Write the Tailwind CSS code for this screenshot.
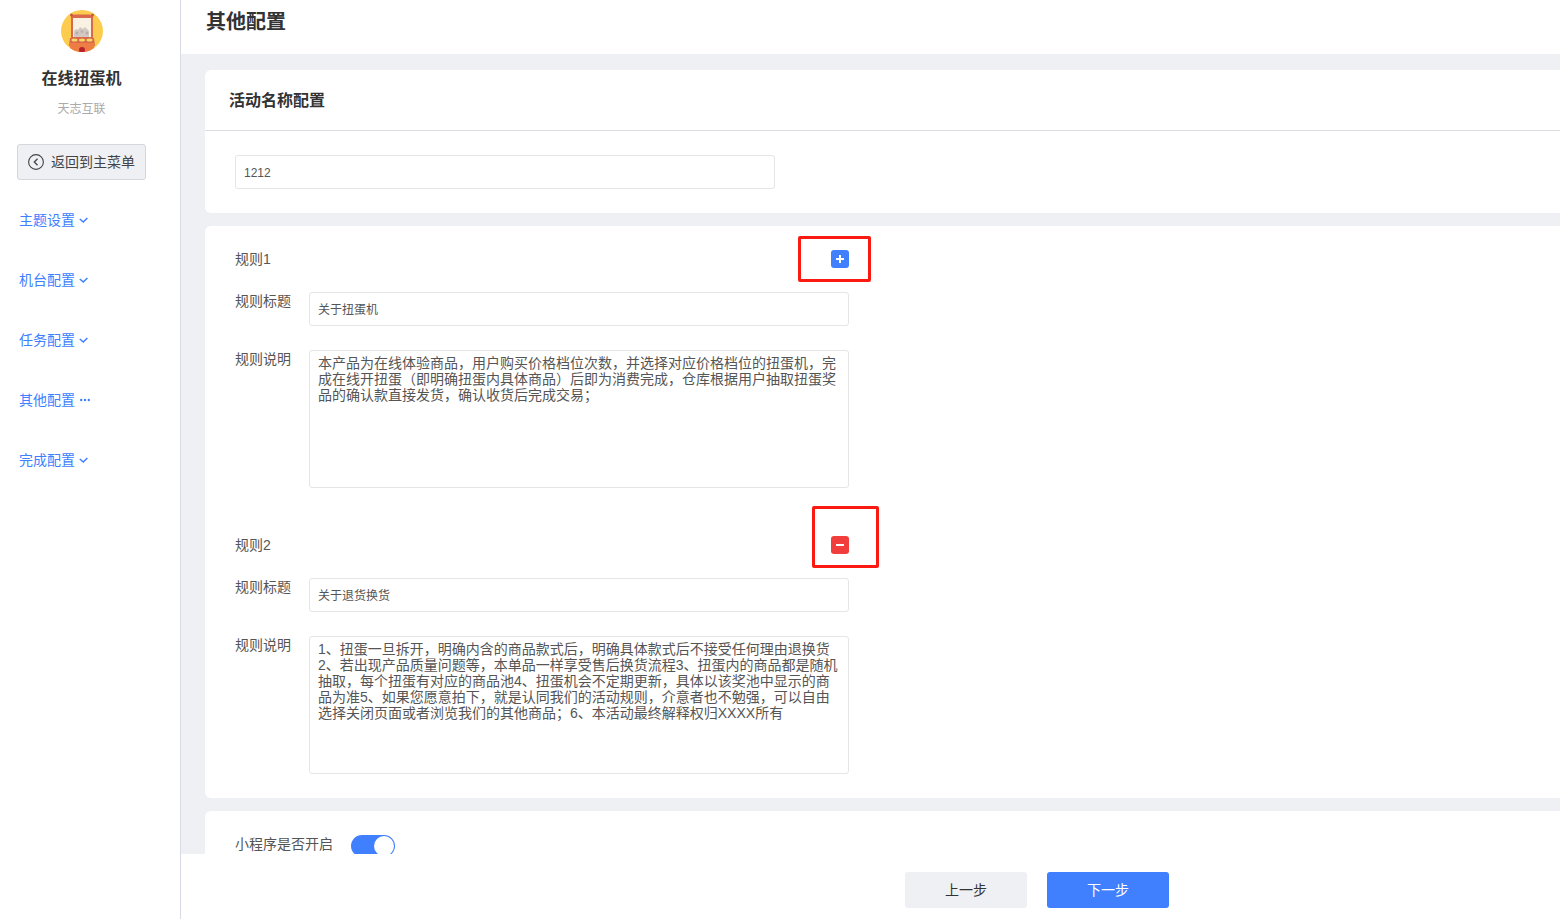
<!DOCTYPE html>
<html lang="zh">

<head>
    <meta charset="UTF-8" />
    <title>其他配置</title>
    <script src="https://cdn.jsdelivr.net/npm/@tailwindcss/browser@4"></script>
</head>

<body class="bg-white text-[#333] overflow-hidden font-['Liberation_Sans','Noto_Sans_CJK_SC',sans-serif]">
    <div class="relative flex h-[919px] w-[1560px] overflow-hidden">

        <!-- sidebar -->
        <aside class="w-[181px] shrink-0 border-r border-[#d8dbe3] bg-white pt-[10px]">
            <div class="w-[163px]">
                <svg class="mx-auto h-[42px] w-[42px]" viewBox="0 0 42 42">
                    <defs>
                        <clipPath id="avatar-clip"><circle cx="21" cy="21" r="21" /></clipPath>
                    </defs>
                    <g clip-path="url(#avatar-clip)">
                        <rect width="42" height="42" fill="#fdcb4e" />
                        <path d="M10 6 13 4.500h16L32 6v22H10z" fill="#d9694a" />
                        <circle cx="10.500" cy="5" r="1.500" fill="#c9573c" />
                        <circle cx="31.500" cy="5" r="1.500" fill="#c9573c" />
                        <rect x="12" y="8" width="18" height="19" fill="#f9f1e2" />
                        <path d="M13 27v-6l2-2 2 1 2-3 3 2 2-2 2 2 2 2v6z" fill="#d3c8c2" />
                        <circle cx="16" cy="23" r="1.500" fill="#b9aeaa" />
                        <circle cx="21" cy="21.500" r="1.500" fill="#bdb2ae" />
                        <circle cx="26" cy="23" r="1.500" fill="#b9aeaa" />
                        <path d="M9 28h24l1 8H8z" fill="#d9694a" />
                        <ellipse cx="13.500" cy="30" rx="3" ry="1.500" fill="#f7d766" />
                        <ellipse cx="21" cy="30" rx="3" ry="1.500" fill="#f7d766" />
                        <ellipse cx="28.500" cy="30" rx="3" ry="1.500" fill="#f7d766" />
                        <rect x="9" y="33" width="24" height="9" fill="#ee7d45" />
                        <circle cx="21" cy="40" r="3" fill="#b8202a" />
                    </g>
                </svg>
                <h1 class="mt-[15px] text-center text-[16px] leading-[24px] font-bold text-[#333]">在线扭蛋机</h1>
                <p class="mt-[8px] text-center text-[12px] leading-[20px] text-[#aaa]">天志互联</p>
            </div>

            <button class="mt-[25px] ml-[17px] flex h-[36px] w-[129px] items-center rounded-[3px] border border-[#d5d7de] bg-[#eff0f4] pl-[10px] text-[14px] text-[#444]">
                <svg class="h-[16px] w-[16px] shrink-0" viewBox="0 0 16 16" fill="none" stroke="#444" stroke-width="1.100">
                    <circle cx="8" cy="8" r="7.400" />
                    <path d="M9.500 4.800 6.300 8l3.200 3.200" stroke-width="1.300" />
                </svg>
                <span class="ml-[7px]">返回到主菜单</span>
            </button>

            <nav class="mt-[10px] pl-[19px] text-[14px] text-[#4080ff]">
                <a class="flex h-[60px] items-center">主题设置
                    <svg class="ml-[4px] h-[8px] w-[9px]" viewBox="0 0 9 8" fill="none" stroke="#4080ff" stroke-width="1.500"><path d="M.8 3 4.300 6 8.400 2" /></svg>
                </a>
                <a class="flex h-[60px] items-center">机台配置
                    <svg class="ml-[4px] h-[8px] w-[9px]" viewBox="0 0 9 8" fill="none" stroke="#4080ff" stroke-width="1.500"><path d="M.8 3 4.300 6 8.400 2" /></svg>
                </a>
                <a class="flex h-[60px] items-center">任务配置
                    <svg class="ml-[4px] h-[8px] w-[9px]" viewBox="0 0 9 8" fill="none" stroke="#4080ff" stroke-width="1.500"><path d="M.8 3 4.300 6 8.400 2" /></svg>
                </a>
                <a class="flex h-[60px] items-center">其他配置
                    <svg class="ml-[5px] h-[4px] w-[10px]" viewBox="0 0 10 4" fill="#4080ff"><circle cx="1.200" cy="2" r="1.200" /><circle cx="5" cy="2" r="1.200" /><circle cx="8.800" cy="2" r="1.200" /></svg>
                </a>
                <a class="flex h-[60px] items-center">完成配置
                    <svg class="ml-[4px] h-[8px] w-[9px]" viewBox="0 0 9 8" fill="none" stroke="#4080ff" stroke-width="1.500"><path d="M.8 3 4.300 6 8.400 2" /></svg>
                </a>
            </nav>
        </aside>

        <!-- main -->
        <main class="flex min-w-0 flex-1 flex-col">
            <header class="h-[54px] shrink-0 bg-white pt-[7px] pl-[25px]">
                <h2 class="text-[20px] leading-[30px] font-bold text-[#333]">其他配置</h2>
            </header>

            <div class="h-[800px] shrink-0 overflow-hidden bg-[#eff0f4] pt-[16px] pl-[24px]">
                <section class="h-[143px] rounded-l-[6px] bg-white">
                    <h3 class="flex h-[61px] items-center border-b border-[#dcdde3] pt-[2px] pl-[24px] text-[16px] font-bold text-[#333]">活动名称配置</h3>
                    <div class="pt-[24px] pl-[30px]">
                        <input class="h-[34px] w-[540px] rounded-[3px] border border-[#e5e5e5] px-[8px] pt-[2px] text-[12px] text-[#555] outline-none" value="1212" readonly />
                    </div>
                </section>

                <section class="mt-[13px] h-[572px] rounded-l-[6px] bg-white pt-[24px] pl-[30px]">
                    <div class="w-[614px]">
                        <div class="flex h-[18px] items-center justify-between text-[14px] text-[#555]">
                            <span>规则1</span>
                            <span class="flex h-[18px] w-[18px] items-center justify-center rounded-[3px] bg-[#4080ff]">
                                <svg class="h-[8px] w-[8px]" viewBox="0 0 8 8" fill="#fff"><path d="M3 0h2v3h3v2H5v3H3V5H0V3h3z" /></svg>
                            </span>
                        </div>
                        <div class="mt-[24px] flex">
                            <label class="w-[74px] text-[14px] leading-[18px] text-[#555]">规则标题</label>
                            <input class="h-[34px] w-[540px] rounded-[3px] border border-[#e5e5e5] px-[8px] pb-[2px] text-[12px] text-[#555] outline-none" value="关于扭蛋机" readonly />
                        </div>
                        <div class="mt-[24px] flex">
                            <label class="w-[74px] text-[14px] leading-[18px] text-[#555]">规则说明</label>
                            <textarea class="block h-[138px] w-[540px] resize-none overflow-hidden rounded-[3px] border border-[#e5e5e5] px-[8px] pt-[4px] text-[14px] leading-[16px] text-[#555] outline-none" readonly>本产品为在线体验商品，用户购买价格档位次数，并选择对应价格档位的扭蛋机，完成在线开扭蛋（即明确扭蛋内具体商品）后即为消费完成，仓库根据用户抽取扭蛋奖品的确认款直接发货，确认收货后完成交易；</textarea>
                        </div>

                        <div class="mt-[48px] flex h-[18px] items-center justify-between text-[14px] text-[#555]">
                            <span>规则2</span>
                            <span class="flex h-[18px] w-[18px] items-center justify-center rounded-[3px] bg-[#f23d3d]">
                                <span class="h-[2px] w-[8px] bg-white"></span>
                            </span>
                        </div>
                        <div class="mt-[24px] flex">
                            <label class="w-[74px] text-[14px] leading-[18px] text-[#555]">规则标题</label>
                            <input class="h-[34px] w-[540px] rounded-[3px] border border-[#e5e5e5] px-[8px] pb-[2px] text-[12px] text-[#555] outline-none" value="关于退货换货" readonly />
                        </div>
                        <div class="mt-[24px] flex">
                            <label class="w-[74px] text-[14px] leading-[18px] text-[#555]">规则说明</label>
                            <textarea class="block h-[138px] w-[540px] resize-none overflow-hidden rounded-[3px] border border-[#e5e5e5] px-[8px] pt-[4px] text-[14px] leading-[16px] text-[#555] outline-none" readonly>1、扭蛋一旦拆开，明确内含的商品款式后，明确具体款式后不接受任何理由退换货2、若出现产品质量问题等，本单品一样享受售后换货流程3、扭蛋内的商品都是随机抽取，每个扭蛋有对应的商品池4、扭蛋机会不定期更新，具体以该奖池中显示的商品为准5、如果您愿意拍下，就是认同我们的活动规则，介意者也不勉强，可以自由选择关闭页面或者浏览我们的其他商品；6、本活动最终解释权归XXXX所有</textarea>
                        </div>
                    </div>
                </section>

                <section class="mt-[13px] flex h-[100px] items-start rounded-l-[6px] bg-white pt-[24px] pl-[30px]">
                    <span class="w-[116px] text-[14px] leading-[18px] text-[#555]">小程序是否开启</span>
                    <span class="flex h-[22px] w-[44px] items-center justify-end rounded-full bg-[#4080ff] pr-[1px]">
                        <span class="h-[20px] w-[20px] rounded-full bg-white"></span>
                    </span>
                </section>
            </div>

            <footer class="flex flex-1 items-start bg-white pt-[18px] pl-[724px] text-[14px]">
                <button class="h-[36px] w-[122px] rounded-[3px] bg-[#eff0f4] text-[#333]">上一步</button>
                <button class="ml-[20px] h-[36px] w-[122px] rounded-[3px] bg-[#4080ff] text-white">下一步</button>
            </footer>
        </main>

        <!-- red annotation boxes on the screenshot -->
        <div class="absolute top-[236px] left-[798px] h-[46px] w-[73px] rounded-[2px] border-[3px] border-[#fb1a12]"></div>
        <div class="absolute top-[506px] left-[812px] h-[62px] w-[67px] rounded-[2px] border-[3px] border-[#fb1a12]"></div>
    </div>
</body>

</html>
